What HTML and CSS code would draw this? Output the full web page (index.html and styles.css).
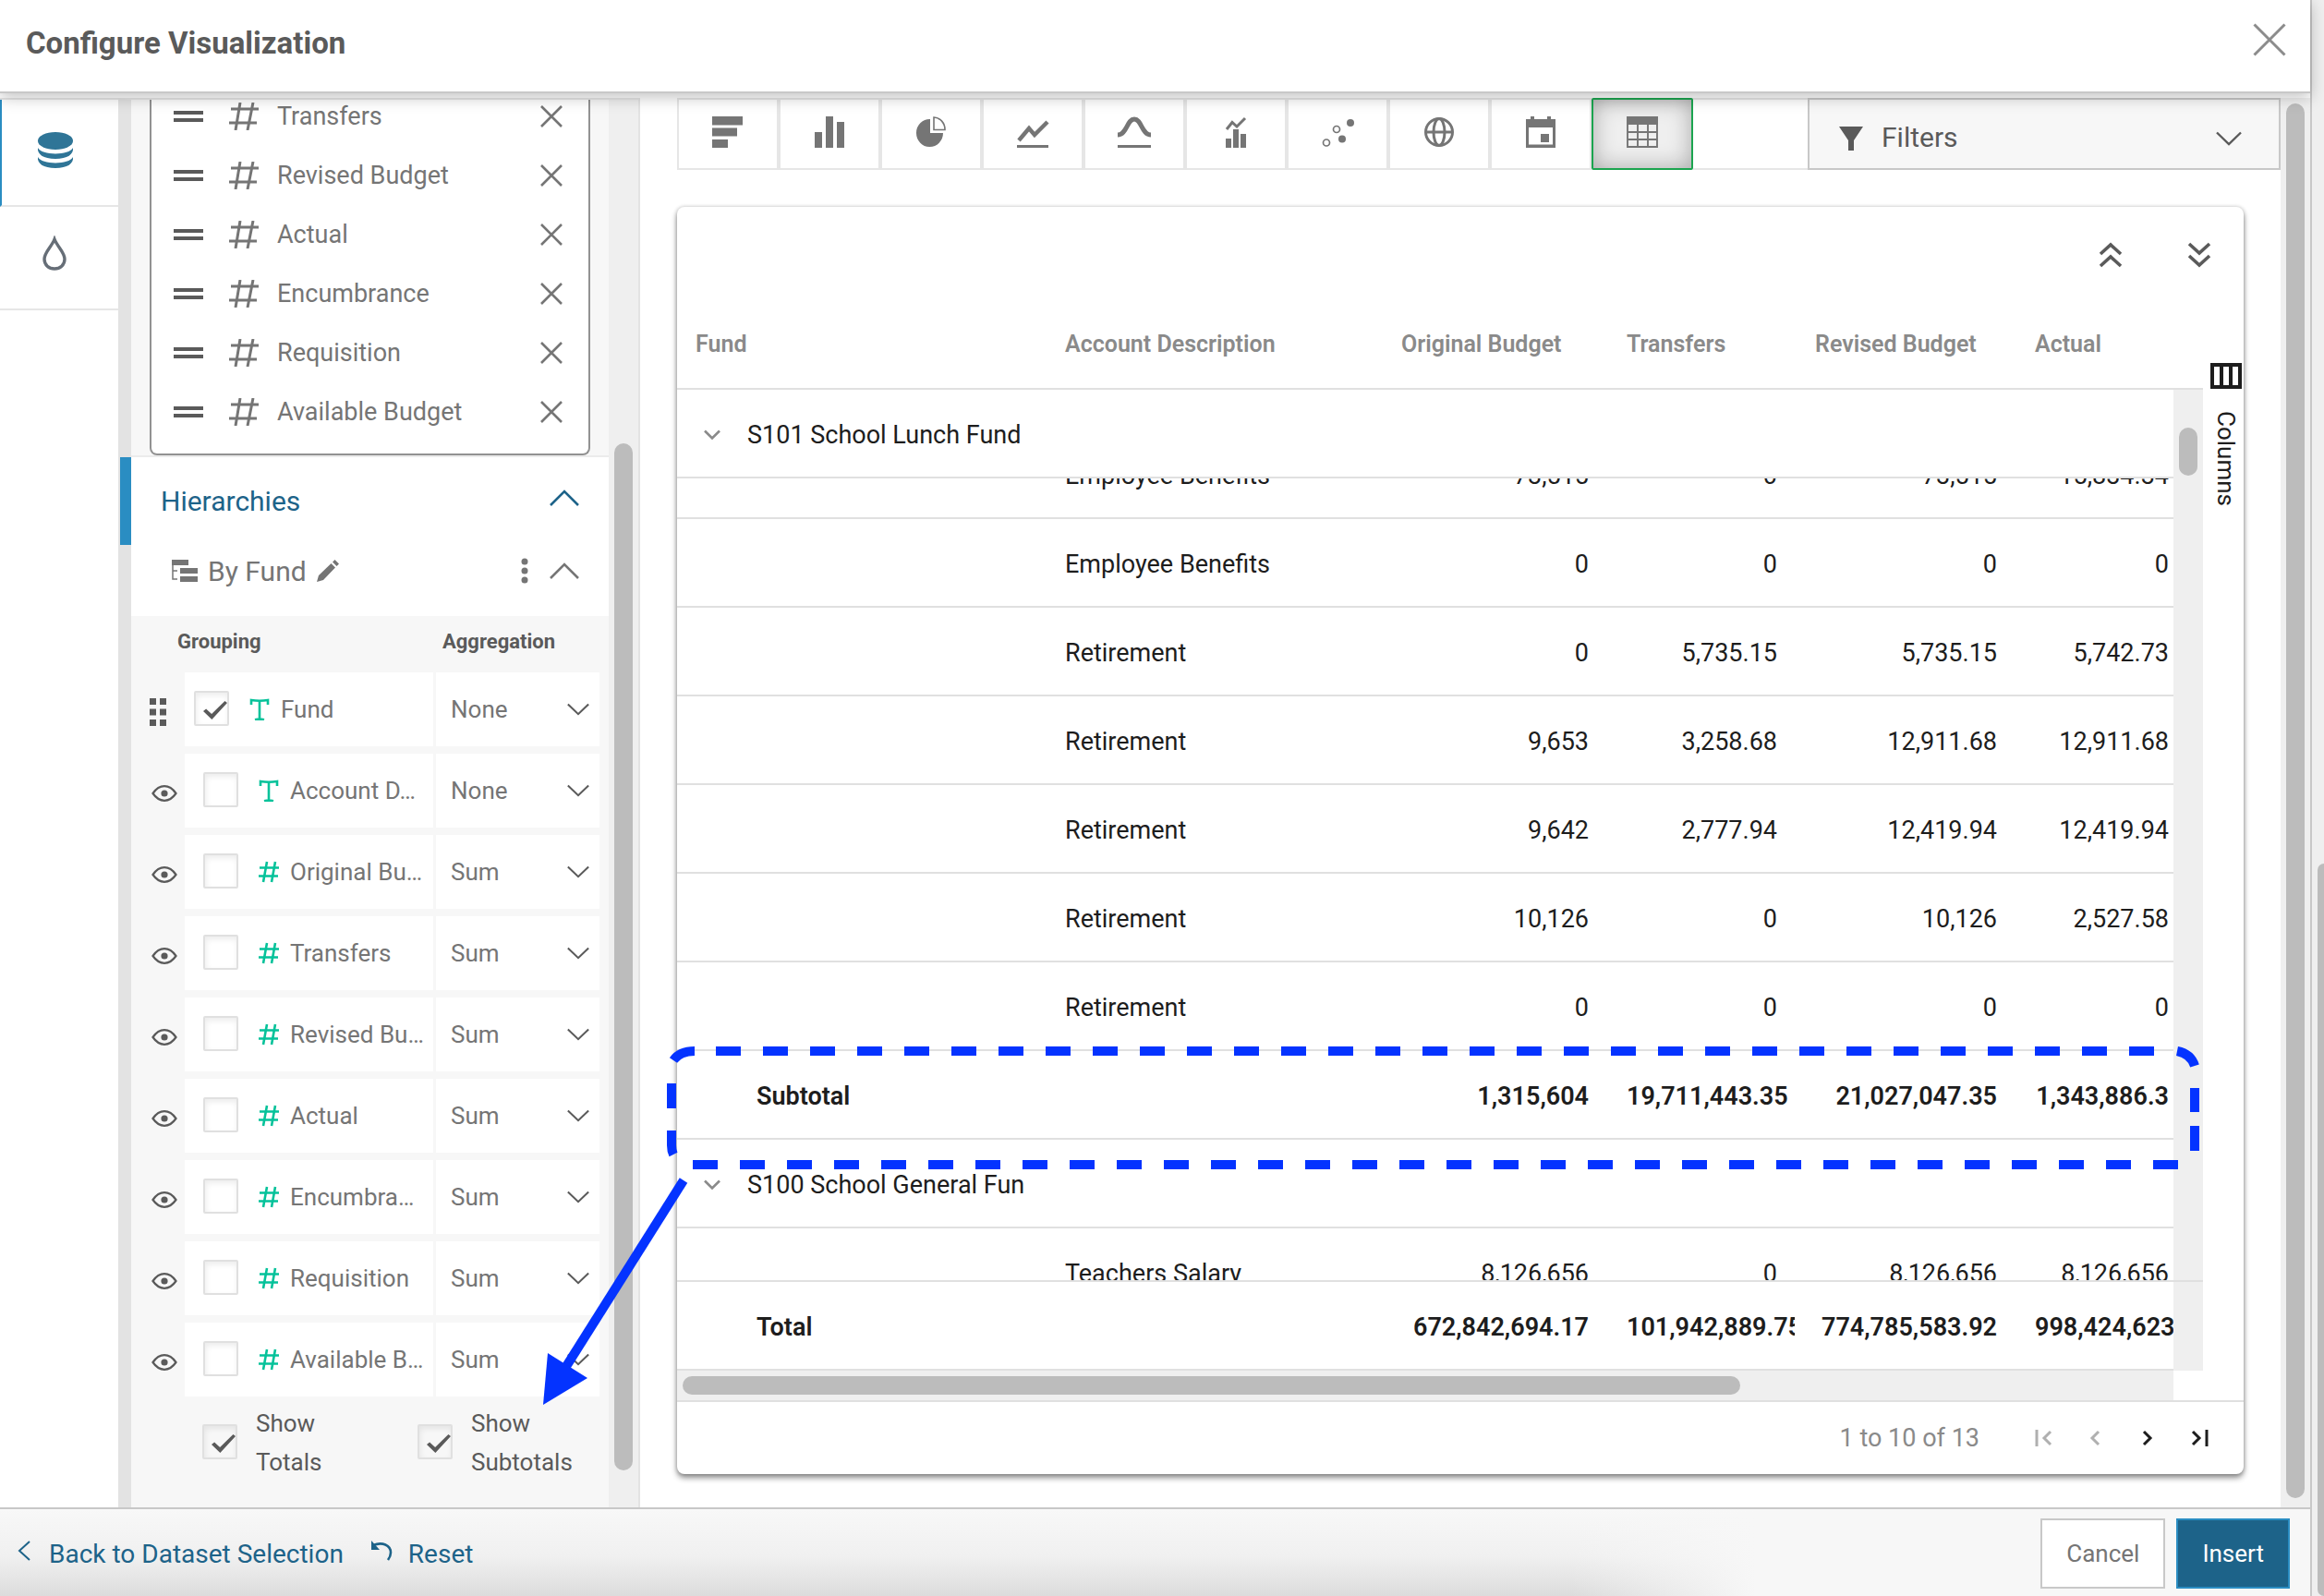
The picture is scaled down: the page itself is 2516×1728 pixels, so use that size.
FILE: index.html
```
<!DOCTYPE html>
<html lang="en">
<head>
    <meta charset="UTF-8">
    <meta name="viewport" content="width=device-width, initial-scale=1.0">
    <title>Configure Visualization</title>
    <link rel="stylesheet" href="styles.css">
</head>
<body>
    <!-- icon set -->
    <svg class="sprite" aria-hidden="true">
        <symbol id="i-close" viewBox="0 0 24 24"><path d="M1 1L23 23M23 1L1 23" fill="none" stroke="currentColor" stroke-width="2"/></symbol>
        <symbol id="i-remove" viewBox="0 0 24 24"><path d="M1 1L23 23M23 1L1 23" fill="none" stroke="currentColor" stroke-width="2.600"/></symbol>
        <symbol id="i-handle" viewBox="0 0 32 12"><path d="M0 2H32M0 10H32" stroke="currentColor" stroke-width="4"/></symbol>
        <symbol id="i-hash" viewBox="0 0 32 30"><path d="M12 0L7 30M26 0L20 30M2 7H32M0 22H30" fill="none" stroke="currentColor" stroke-width="3"/></symbol>
        <symbol id="i-num" viewBox="0 0 24 22"><path d="M10 0L6 22M19 0L15 22M2 6.500H23M1 15.500H22" fill="none" stroke="currentColor" stroke-width="2.600"/></symbol>
        <symbol id="i-text" viewBox="0 0 24 24"><path d="M3 7V2Q12 3.500 21 2V7M12 2V23M7 23.200Q12 22 17 23.200" fill="none" stroke="currentColor" stroke-width="2.600"/></symbol>
        <symbol id="i-down" viewBox="0 0 28 16"><path d="M1 1.500L14 14L27 1.500" fill="none" stroke="currentColor" stroke-width="2.400"/></symbol>
        <symbol id="i-expand" viewBox="0 0 18 12"><path d="M1 1.500L9 9.500L17 1.500" fill="none" stroke="currentColor" stroke-width="2.600"/></symbol>
        <symbol id="i-up" viewBox="0 0 32 18"><path d="M1 17L16 2L31 17" fill="none" stroke="currentColor" stroke-width="2.600"/></symbol>
        <symbol id="i-eye" viewBox="0 0 28 18"><path d="M1.500 9C6 2.500 10 1.200 14 1.200S22 2.500 26.500 9C22 15.500 18 16.800 14 16.800S6 15.500 1.500 9Z" fill="none" stroke="currentColor" stroke-width="2.200"/><circle cx="14" cy="9" r="3.600" fill="currentColor"/></symbol>
        <symbol id="i-drag" viewBox="0 0 18 30"><path d="M0 0h7v7h-7zM11 0h7v7h-7zM0 11.500h7v7h-7zM11 11.500h7v7h-7zM0 23h7v7h-7zM11 23h7v7h-7z" fill="currentColor"/></symbol>
    </svg>

    <div class="modal">
        <header class="modal-header">
            <h1>Configure Visualization</h1>
            <button class="icon-btn close" aria-label="Close"><svg width="36" height="36"><use href="#i-close"/></svg></button>
        </header>

        <div class="modal-body">
            <nav class="rail">
                <button class="rail-item active" aria-label="Data">
                    <svg width="40" height="40" viewBox="0 0 40 40" fill="#2f7597"><ellipse cx="20" cy="9.500" rx="19" ry="9.500"/><path d="M1 17C5 25.500 35 25.500 39 17C40 24 33 29 20 29S0 24 1 17ZM1 27C5 35.500 35 35.500 39 27C40 34 33 39 20 39S0 34 1 27Z"/></svg>
                </button>
                <button class="rail-item" aria-label="Style">
                    <svg width="28" height="38" viewBox="0 0 28 38"><path d="M14 4C11 12 3 18 3 25.500C3 32 8 36 14 36S25 32 25 25.500C25 18 17 12 14 4Z" fill="none" stroke="#666e77" stroke-width="3.400"/></svg>
                </button>
            </nav>

            <aside class="panel">
                <div class="panel-content">
                    <div class="fields">
                        <ul class="field-list">
                            <li><svg class="handle"><use href="#i-handle"/></svg><svg class="hash"><use href="#i-hash"/></svg><span>Transfers</span><button class="icon-btn" aria-label="Remove Transfers"><svg width="24" height="24"><use href="#i-remove"/></svg></button></li>
                            <li><svg class="handle"><use href="#i-handle"/></svg><svg class="hash"><use href="#i-hash"/></svg><span>Revised Budget</span><button class="icon-btn" aria-label="Remove Revised Budget"><svg width="24" height="24"><use href="#i-remove"/></svg></button></li>
                            <li><svg class="handle"><use href="#i-handle"/></svg><svg class="hash"><use href="#i-hash"/></svg><span>Actual</span><button class="icon-btn" aria-label="Remove Actual"><svg width="24" height="24"><use href="#i-remove"/></svg></button></li>
                            <li><svg class="handle"><use href="#i-handle"/></svg><svg class="hash"><use href="#i-hash"/></svg><span>Encumbrance</span><button class="icon-btn" aria-label="Remove Encumbrance"><svg width="24" height="24"><use href="#i-remove"/></svg></button></li>
                            <li><svg class="handle"><use href="#i-handle"/></svg><svg class="hash"><use href="#i-hash"/></svg><span>Requisition</span><button class="icon-btn" aria-label="Remove Requisition"><svg width="24" height="24"><use href="#i-remove"/></svg></button></li>
                            <li><svg class="handle"><use href="#i-handle"/></svg><svg class="hash"><use href="#i-hash"/></svg><span>Available Budget</span><button class="icon-btn" aria-label="Remove Available Budget"><svg width="24" height="24"><use href="#i-remove"/></svg></button></li>
                        </ul>
                    </div>

                    <section class="hierarchies">
                        <button class="section-title">Hierarchies<svg width="32" height="18"><use href="#i-up"/></svg></button>
                        <div class="group-title">
                            <svg width="28" height="24" viewBox="0 0 28 24" fill="#757575"><path d="M0 0h18v6h-18zM9 9h19v6h-19zM9 18h19v6h-19z"/><path d="M1 6V21H6M1 12H6" fill="none" stroke="#757575" stroke-width="1.500"/></svg>
                            <span>By Fund</span>
                            <button class="icon-btn" aria-label="Rename"><svg width="24" height="24" viewBox="0 0 24 24" fill="#757575"><path d="M0 24L2 17L15.500 4L20 8.500L7 22ZM17 2.500L19.500 0L24 4.500L21.500 7Z"/></svg></button>
                            <button class="icon-btn more" aria-label="More"><svg width="8" height="28" viewBox="0 0 8 28" fill="#757575"><circle cx="4" cy="4" r="3.500"/><circle cx="4" cy="14" r="3.500"/><circle cx="4" cy="24" r="3.500"/></svg></button>
                            <button class="icon-btn" aria-label="Collapse"><svg width="32" height="18"><use href="#i-up"/></svg></button>
                        </div>
                    </section>

                    <div class="grouping">
                        <div class="grouping-head"><span>Grouping</span><span>Aggregation</span></div>

                        <div class="group-row first">
                            <svg class="drag"><use href="#i-drag"/></svg>
                            <label class="group-cell"><input type="checkbox" checked><svg class="type"><use href="#i-text"/></svg><span>Fund</span></label>
                            <div class="agg-cell"><select aria-label="Fund aggregation"><option>None</option></select><svg><use href="#i-down"/></svg></div>
                        </div>
                        <div class="group-row">
                            <svg class="eye"><use href="#i-eye"/></svg>
                            <label class="group-cell"><input type="checkbox"><svg class="type"><use href="#i-text"/></svg><span>Account D…</span></label>
                            <div class="agg-cell"><select aria-label="Account Description aggregation"><option>None</option></select><svg><use href="#i-down"/></svg></div>
                        </div>
                        <div class="group-row">
                            <svg class="eye"><use href="#i-eye"/></svg>
                            <label class="group-cell"><input type="checkbox"><svg class="type"><use href="#i-num"/></svg><span>Original Bu…</span></label>
                            <div class="agg-cell"><select aria-label="Original Budget aggregation"><option>Sum</option></select><svg><use href="#i-down"/></svg></div>
                        </div>
                        <div class="group-row">
                            <svg class="eye"><use href="#i-eye"/></svg>
                            <label class="group-cell"><input type="checkbox"><svg class="type"><use href="#i-num"/></svg><span>Transfers</span></label>
                            <div class="agg-cell"><select aria-label="Transfers aggregation"><option>Sum</option></select><svg><use href="#i-down"/></svg></div>
                        </div>
                        <div class="group-row">
                            <svg class="eye"><use href="#i-eye"/></svg>
                            <label class="group-cell"><input type="checkbox"><svg class="type"><use href="#i-num"/></svg><span>Revised Bu…</span></label>
                            <div class="agg-cell"><select aria-label="Revised Budget aggregation"><option>Sum</option></select><svg><use href="#i-down"/></svg></div>
                        </div>
                        <div class="group-row">
                            <svg class="eye"><use href="#i-eye"/></svg>
                            <label class="group-cell"><input type="checkbox"><svg class="type"><use href="#i-num"/></svg><span>Actual</span></label>
                            <div class="agg-cell"><select aria-label="Actual aggregation"><option>Sum</option></select><svg><use href="#i-down"/></svg></div>
                        </div>
                        <div class="group-row">
                            <svg class="eye"><use href="#i-eye"/></svg>
                            <label class="group-cell"><input type="checkbox"><svg class="type"><use href="#i-num"/></svg><span>Encumbra…</span></label>
                            <div class="agg-cell"><select aria-label="Encumbrance aggregation"><option>Sum</option></select><svg><use href="#i-down"/></svg></div>
                        </div>
                        <div class="group-row">
                            <svg class="eye"><use href="#i-eye"/></svg>
                            <label class="group-cell"><input type="checkbox"><svg class="type"><use href="#i-num"/></svg><span>Requisition</span></label>
                            <div class="agg-cell"><select aria-label="Requisition aggregation"><option>Sum</option></select><svg><use href="#i-down"/></svg></div>
                        </div>
                        <div class="group-row">
                            <svg class="eye"><use href="#i-eye"/></svg>
                            <label class="group-cell"><input type="checkbox"><svg class="type"><use href="#i-num"/></svg><span>Available B…</span></label>
                            <div class="agg-cell"><select aria-label="Available Budget aggregation"><option>Sum</option></select><svg><use href="#i-down"/></svg></div>
                        </div>

                        <div class="totals">
                            <label><input type="checkbox" checked><span>Show Totals</span></label>
                            <label><input type="checkbox" checked><span>Show Subtotals</span></label>
                        </div>
                    </div>
                </div>
                <div class="panel-scroll"><div class="thumb"></div></div>
            </aside>

            <main class="content">
                <div class="toolbar">
                    <button class="chart-btn" aria-label="Bar"><svg viewBox="0 0 36 36"><path d="M1 1h33v9.500h-33zM1 13.500h27v9h-27zM1 26h17v9h-17z"/></svg></button>
                    <button class="chart-btn" aria-label="Column"><svg viewBox="0 0 36 36"><path d="M2 18h8v17h-8zM14 1h8v34h-8zM26 7h8v28h-8z"/></svg></button>
                    <button class="chart-btn" aria-label="Pie"><svg viewBox="0 0 36 36"><path d="M17 4V19H31A14.500 15 0 1 1 17 4Z"/><path d="M21 2V15.500H33C33 8 28 2.500 21 2Z" fill="none" stroke="#757575" stroke-width="1.600"/></svg></button>
                    <button class="chart-btn" aria-label="Line"><svg viewBox="0 0 36 36"><path d="M3 27L14 14L20 21L34 7" fill="none" stroke="#757575" stroke-width="4.400"/><path d="M1 32h34v3h-34z"/></svg></button>
                    <button class="chart-btn" aria-label="Spline"><svg viewBox="0 0 36 36"><path d="M0 21C10 21 10 4 18 4S26 21 36 21" fill="none" stroke="#757575" stroke-width="5"/><path d="M0 32h36v3h-36z"/></svg></button>
                    <button class="chart-btn" aria-label="Combo"><svg viewBox="0 0 36 36"><path d="M7 25h6v10h-6zM15 15h6v20h-6zM23 20h6v15h-6z"/><path d="M8 15L14 7.500L19 12L28 3" fill="none" stroke="#757575" stroke-width="3"/></svg></button>
                    <button class="chart-btn" aria-label="Scatter"><svg viewBox="0 0 36 36"><circle cx="32" cy="8" r="4"/><circle cx="23" cy="25.500" r="4"/><g fill="none" stroke="#757575" stroke-width="1.700"><circle cx="17" cy="15" r="3.500"/><circle cx="6" cy="29.500" r="3.500"/></g></svg></button>
                    <button class="chart-btn" aria-label="Map"><svg viewBox="0 0 36 36"><g fill="none" stroke="#757575" stroke-width="3"><circle cx="18" cy="18" r="14.500"/><ellipse cx="18" cy="18" rx="6" ry="14.500"/><path d="M4 18H32"/></g></svg></button>
                    <button class="chart-btn" aria-label="Calendar"><svg viewBox="0 0 36 36"><path d="M7 1h4v3h14V1h4v3h5v31H2V4h5ZM5 13V31.500H31V13ZM18 20h9v9h-9z" fill-rule="evenodd"/></svg></button>
                    <button class="chart-btn selected" aria-label="Table"><svg viewBox="0 0 36 36"><path d="M1 1h34v9h-34z"/><path d="M2 10V34H34V10M13 10V34M24 10V34M2 18H34M2 26H34" fill="none" stroke="#757575" stroke-width="1.900"/></svg></button>
                    <div class="toolbar-gap"></div>
                    <button class="filters">
                        <svg width="26" height="28" viewBox="0 0 26 28"><path d="M0 1h26L16 16V27H10V16Z" fill="#5a5a5a"/></svg>
                        <span>Filters</span>
                        <svg width="28" height="16"><use href="#i-down"/></svg>
                    </button>
                </div>

                <div class="card">
                    <div class="card-tools">
                        <button class="icon-btn" aria-label="Collapse all"><svg width="26" height="28" viewBox="0 0 26 28"><path d="M2 13L13 3L24 13M2 26L13 16L24 26" fill="none" stroke="#5a5a5a" stroke-width="3.600"/></svg></button>
                        <button class="icon-btn" aria-label="Expand all"><svg width="26" height="28" viewBox="0 0 26 28"><path d="M2 2L13 12L24 2M2 15L13 25L24 15" fill="none" stroke="#5a5a5a" stroke-width="3.600"/></svg></button>
                    </div>

                    <div class="grid">
                        <div class="grid-view">
                            <table>
                                <thead>
                                    <tr><th>Fund</th><th>Account Description</th><th>Original Budget</th><th>Transfers</th><th>Revised Budget</th><th>Actual</th></tr>
                                </thead>
                                <tbody>
                                    <tr class="group sticky"><td colspan="6"><svg width="18" height="12"><use href="#i-expand"/></svg>S101 School Lunch Fund</td></tr>
                                    <tr class="scrolled"><td></td><td>Employee Benefits</td><td>73,515</td><td>0</td><td>73,515</td><td>15,834.34</td></tr>
                                    <tr><td></td><td>Employee Benefits</td><td>0</td><td>0</td><td>0</td><td>0</td></tr>
                                    <tr><td></td><td>Retirement</td><td>0</td><td>5,735.15</td><td>5,735.15</td><td>5,742.73</td></tr>
                                    <tr><td></td><td>Retirement</td><td>9,653</td><td>3,258.68</td><td>12,911.68</td><td>12,911.68</td></tr>
                                    <tr><td></td><td>Retirement</td><td>9,642</td><td>2,777.94</td><td>12,419.94</td><td>12,419.94</td></tr>
                                    <tr><td></td><td>Retirement</td><td>10,126</td><td>0</td><td>10,126</td><td>2,527.58</td></tr>
                                    <tr><td></td><td>Retirement</td><td>0</td><td>0</td><td>0</td><td>0</td></tr>
                                    <tr class="sum"><td>Subtotal</td><td></td><td>1,315,604</td><td>19,711,443.35</td><td>21,027,047.35</td><td>1,343,886.3</td></tr>
                                    <tr class="group"><td colspan="6"><svg width="18" height="12"><use href="#i-expand"/></svg>S100 School General Fun</td></tr>
                                    <tr><td></td><td>Teachers Salary</td><td>8,126,656</td><td>0</td><td>8,126,656</td><td>8,126,656</td></tr>
                                </tbody>
                                <tfoot>
                                    <tr class="sum"><td>Total</td><td></td><td>672,842,694.17</td><td>101,942,889.75</td><td>774,785,583.92</td><td>998,424,623.10</td></tr>
                                </tfoot>
                            </table>
                            <div class="h-scroll"><div class="thumb"></div></div>
                        </div>
                        <div class="v-scroll">
                            <div class="v-head"></div>
                            <div class="v-track"><div class="thumb"></div></div>
                            <div class="v-foot"></div>
                        </div>
                        <button class="columns-tab">
                            <svg width="34" height="28" viewBox="0 0 34 28"><path d="M2 2H32V26H2ZM12 2V26M22 2V26" fill="none" stroke="#1d1d1d" stroke-width="4"/></svg>
                            <span>Columns</span>
                        </button>
                    </div>

                    <div class="pager">
                        <span>1 to 10 of 13</span>
                        <button class="icon-btn" disabled aria-label="First page"><svg viewBox="0 0 20 20"><path d="M2 1V19M17 3L10 10L17 17" /></svg></button>
                        <button class="icon-btn" disabled aria-label="Previous page"><svg viewBox="0 0 20 20"><path d="M13 3L6 10L13 17"/></svg></button>
                        <button class="icon-btn" aria-label="Next page"><svg viewBox="0 0 20 20"><path d="M6 3L13 10L6 17"/></svg></button>
                        <button class="icon-btn" aria-label="Last page"><svg viewBox="0 0 20 20"><path d="M3 3L10 10L3 17M18 1V19"/></svg></button>
                    </div>
                </div>
            </main>
            <div class="content-scroll"><div class="thumb"></div></div>
        </div>

        <footer class="modal-footer">
            <a href="#"><svg width="14" height="22" viewBox="0 0 14 22"><path d="M13 1L2 11L13 21" fill="none" stroke="currentColor" stroke-width="2"/></svg>Back to Dataset Selection</a>
            <a href="#" class="reset"><svg width="24" height="22" viewBox="0 0 24 22"><path d="M2 5C12 1 21 5 21 13Q21 17 18 21" fill="none" stroke="currentColor" stroke-width="2.600"/><path d="M0 0V10H9Z" fill="currentColor"/></svg>Reset</a>
            <div class="actions">
                <button class="btn">Cancel</button>
                <button class="btn primary">Insert</button>
            </div>
        </footer>
    </div>
    <div class="page-scroll"><div class="thumb"></div></div>

    <!-- callout linking the subtotal row to its checkbox -->
    <svg class="callout" width="2516" height="1728" aria-hidden="true">
        <g fill="none" stroke="#0433ff" stroke-width="10">
            <path d="M775 1138H2334" stroke-dasharray="27 24"/>
            <path d="M750 1261H2359" stroke-dasharray="27 24"/>
            <path d="M729 1148Q736 1138 752 1138M727 1173V1200M727 1224V1240Q727 1246 729 1250"/>
            <path d="M2357 1138Q2372 1141 2376 1154M2376 1178V1204M2376 1219V1246"/>
            <path d="M740 1278L612 1481"/>
        </g>
        <path d="M588 1521L593 1465L636 1492Z" fill="#0433ff"/>
    </svg>
</body>
</html>
```
FILE: styles.css
```
* {
    margin: 0;
    padding: 0;
    box-sizing: border-box;
}

body {
    font-family: Roboto, sans-serif;
    font-size: 27px;
    color: #757575;
    background-color: #ffffff;
    display: flex;
    height: 100vh;
    overflow: hidden;
    position: relative;
}

button,
select {
    font: inherit;
    color: inherit;
    background: none;
    border: none;
    cursor: pointer;
}

svg {
    display: block;
    flex-shrink: 0;
}

.sprite {
    display: none;
}

.callout {
    position: absolute;
    top: 0;
    left: 0;
    pointer-events: none;
    z-index: 5;
}

.icon-btn {
    display: flex;
    align-items: center;
    justify-content: center;
}

.thumb {
    background-color: #bcbcbc;
    border-radius: 10px;
}

/* modal */
.modal {
    flex: 1;
    min-width: 0;
    display: flex;
    flex-direction: column;
}

.modal-header {
    height: 101px;
    padding: 0 26px 6px 28px;
    display: flex;
    align-items: center;
    justify-content: space-between;
    background-color: #ffffff;
    border-bottom: 2px solid #c8c8c8;
    box-shadow: 0 4px 16px rgba(0, 0, 0, 0.25);
    position: relative;
    z-index: 2;
}

.modal-header h1 {
    font-size: 33px;
    font-weight: 700;
    color: #5a5a5a;
}

.close {
    color: #8c8c8c;
    margin-bottom: 8px;
}

.modal-body {
    flex: 1;
    min-height: 0;
    display: flex;
    padding-top: 5px;
}

/* left rail */
.rail {
    width: 128px;
    border-top: 2px solid #e6e6e6;
}

.rail-item {
    width: 100%;
    height: 112px;
    padding: 0 10px 10px 0;
    display: flex;
    align-items: center;
    justify-content: center;
    border-bottom: 2px solid #e6e6e6;
}

.rail-item.active {
    height: 116px;
    padding-bottom: 4px;
    border-left: 2px solid #2a8dc2;
}

/* side panel */
.panel {
    width: 565px;
    display: flex;
    border-left: 14px solid #e3e3e3;
    border-right: 2px solid #e3e3e3;
    border-top: 2px solid #e6e6e6;
    background-color: #f7f7f7;
}

.panel-content {
    flex: 1;
    min-width: 0;
    overflow: hidden;
    margin-left: -12px;
    padding-left: 12px;
}

.panel-scroll {
    width: 32px;
    padding: 372px 6px 0;
    background-color: #efefef;
}

.panel-scroll .thumb {
    height: 1112px;
}

.fields {
    margin-top: -14px;
    padding: 0 20px;
    border-bottom: 2px solid #ebebeb;
}

.field-list {
    list-style: none;
    padding: 0 28px 13px 24px;
    background-color: #ffffff;
    border: 2px solid #929292;
    border-top: none;
    border-radius: 0 0 8px 8px;
}

.field-list li {
    height: 64px;
    display: flex;
    align-items: center;
}

.field-list .handle {
    width: 32px;
    height: 12px;
    color: #5a5a5a;
    margin-right: 28px;
}

.field-list .hash {
    width: 32px;
    height: 30px;
    margin-right: 20px;
}

.field-list span {
    flex: 1;
}

.hierarchies {
    background-color: #ffffff;
    height: 172px;
}

.section-title {
    width: calc(100% + 12px);
    height: 95px;
    margin-left: -12px;
    padding: 0 32px 0 32px;
    display: flex;
    align-items: center;
    justify-content: space-between;
    font-size: 30px;
    color: #1d6389;
    border-left: 12px solid #2a8dc2;
}

.section-title svg {
    margin-bottom: 8px;
}

.group-title {
    height: 58px;
    padding: 0 32px 2px 44px;
    display: flex;
    align-items: center;
    gap: 11px;
    font-size: 30px;
}

.group-title .more {
    margin-left: auto;
    margin-right: 12px;
}

.grouping-head {
    height: 61px;
    padding: 0 50px 6px;
    display: grid;
    grid-template-columns: 287px 1fr;
    align-items: center;
    font-size: 22px;
    font-weight: 700;
    color: #5a5a5a;
}

.group-row {
    height: 80px;
    margin-bottom: 8px;
    padding-right: 10px;
    display: grid;
    grid-template-columns: 58px 269px 1fr;
    align-items: center;
    font-size: 26px;
}

.eye {
    width: 28px;
    height: 18px;
    margin: 6px 0 0 22px;
    color: #5a5a5a;
}

.drag {
    width: 18px;
    height: 30px;
    margin: 6px 0 0 20px;
    color: #5a5a5a;
}

.group-cell {
    height: 80px;
    padding: 0 6px 0 20px;
    display: flex;
    align-items: center;
    background-color: #ffffff;
}

.first .group-cell {
    padding-left: 10px;
}

.group-cell span {
    white-space: nowrap;
}

.type {
    width: 24px;
    height: 24px;
    margin: 0 11px 0 21px;
    color: #05c29a;
}

input[type="checkbox"] {
    appearance: none;
    flex-shrink: 0;
    width: 38px;
    height: 38px;
    margin-bottom: 2px;
    border: 2px solid #e0e0e0;
    border-radius: 2px;
    box-shadow: inset 1px 3px 6px rgba(0, 0, 0, 0.08);
}

input[type="checkbox"]:checked::after {
    content: "";
    display: block;
    width: 26px;
    height: 20px;
    margin: 9px 0 0 8px;
    background-color: #5a5a5a;
    clip-path: polygon(0 55%, 12% 42%, 35% 70%, 90% 0, 100% 10%, 36% 100%);
}

.agg-cell {
    height: 80px;
    margin-left: 3px;
    display: flex;
    align-items: center;
    background-color: #ffffff;
    position: relative;
}

.agg-cell select {
    appearance: none;
    width: 100%;
    height: 100%;
    padding-left: 16px;
}

.agg-cell svg {
    position: absolute;
    right: 11px;
    width: 24px;
    height: 14px;
    color: #5a5a5a;
    pointer-events: none;
}

.totals {
    margin-left: 77px;
    display: grid;
    grid-template-columns: 233px 1fr;
    font-size: 26px;
    line-height: 42px;
    color: #5a5a5a;
}

.totals label {
    display: flex;
    align-items: center;
    gap: 20px;
}

.totals span {
    width: min-content;
}

/* content */
.content {
    flex: 1;
    min-width: 0;
    display: flex;
    flex-direction: column;
    padding-left: 40px;
}

.toolbar {
    height: 78px;
    display: flex;
}

.chart-btn {
    width: 110px;
    padding-bottom: 4px;
    display: flex;
    align-items: center;
    justify-content: center;
    border: 2px solid #e6e6e6;
}

.chart-btn svg {
    width: 36px;
    height: 36px;
    fill: #757575;
}

.chart-btn.selected {
    border-color: #1ba44f;
    border-radius: 2px;
    background-color: #efefef;
    box-shadow: inset 0 0 24px rgba(0, 0, 0, 0.3);
}

.toolbar-gap {
    flex: 1;
    border-top: 2px solid #e6e6e6;
    border-bottom: 2px solid #e6e6e6;
}

.filters {
    width: 512px;
    padding: 6px 40px 0 32px;
    display: flex;
    align-items: center;
    gap: 20px;
    font-size: 30px;
    text-align: left;
    color: #5a5a5a;
    background-color: #f7f7f7;
    border: 2px solid #c8c8c8;
}

.filters span {
    flex: 1;
}

.filters svg {
    margin-top: 4px;
}

.card {
    flex: 1;
    min-height: 0;
    margin: 40px 40px 36px 0;
    display: flex;
    flex-direction: column;
    background-color: #ffffff;
    border-radius: 8px;
    box-shadow: 0 4px 6px rgba(0, 0, 0, 0.45), 0 0 4px rgba(0, 0, 0, 0.2);
}

.card-tools {
    height: 100px;
    padding: 4px 35px 0 0;
    display: flex;
    align-items: center;
    justify-content: flex-end;
    gap: 70px;
}

.grid {
    flex: 1;
    min-height: 0;
    display: flex;
    border-bottom: 2px solid #e0e0e0;
}

.grid-view {
    flex: 1;
    min-width: 0;
    display: flex;
    flex-direction: column;
    overflow: hidden;
}

table {
    flex: 1;
    min-height: 0;
    display: flex;
    flex-direction: column;
    color: #1d1d1d;
}

thead,
tbody,
tfoot {
    display: block;
}

tbody {
    flex: 1;
    min-height: 0;
    overflow: hidden;
}

tr {
    height: 96px;
    display: grid;
    grid-template-columns: 398px 364px 244px 204px 238px 186px;
    align-items: center;
    border-bottom: 2px solid #e0e0e0;
    background-color: #ffffff;
}

thead tr {
    height: 98px;
}

th {
    padding: 0 19px 0 22px;
    text-align: left;
    font-size: 25px;
    font-weight: 600;
    color: #8a8a8a;
}

th:first-child {
    padding-left: 20px;
}

td {
    padding: 4px 19px 0 22px;
    overflow: hidden;
    white-space: nowrap;
    text-align: right;
}

td:first-child,
td:nth-child(2) {
    text-align: left;
}

.group td {
    grid-column: 1 / -1;
    padding-left: 29px;
    display: flex;
    align-items: center;
    gap: 29px;
}

.group svg {
    color: #8a8a8a;
}

.sticky {
    position: relative;
    z-index: 1;
}

.scrolled {
    margin-top: -52px;
}

.sum td {
    font-weight: 600;
}

.sum td:first-child {
    padding-left: 86px;
}

tfoot {
    border-top: 2px solid #e0e0e0;
}

.h-scroll {
    height: 32px;
    padding: 6px;
    background-color: #efefef;
}

.h-scroll .thumb {
    width: 1145px;
    height: 20px;
}

.v-scroll {
    width: 32px;
    margin-bottom: 32px;
    display: flex;
    flex-direction: column;
}

.v-head {
    height: 98px;
    border-bottom: 2px solid #e0e0e0;
}

.v-track {
    flex: 1;
    padding: 41px 6px 0;
    background-color: #efefef;
}

.v-track .thumb {
    height: 52px;
}

.v-foot {
    height: 98px;
    background-color: #efefef;
    border-top: 2px solid #e0e0e0;
}

.columns-tab {
    width: 44px;
    padding: 69px 0 0 6px;
    display: flex;
    flex-direction: column;
    align-items: center;
    gap: 24px;
    font-size: 26px;
    color: #1d1d1d;
}

.columns-tab span {
    writing-mode: vertical-rl;
}

.pager {
    height: 78px;
    padding-right: 38px;
    display: flex;
    align-items: center;
    justify-content: flex-end;
    gap: 36px;
    color: #8a8a8a;
}

.pager span {
    margin-right: 24px;
}

.pager svg {
    width: 20px;
    height: 20px;
    fill: none;
    stroke: #1d1d1d;
    stroke-width: 3;
}

.pager button:disabled svg {
    stroke: #b0b0b0;
}

.content-scroll {
    width: 32px;
    padding: 6px 6px 10px;
    background-color: #efefef;
}

.content-scroll .thumb {
    height: 100%;
}

/* footer */
.modal-footer {
    height: 96px;
    padding: 2px 22px 0 19px;
    display: flex;
    align-items: center;
    gap: 30px;
    border-top: 2px solid #c8c8c8;
    background: linear-gradient(to right, rgba(247, 247, 247, 0) 68%, #f7f7f7 76%),
        linear-gradient(to bottom, #f8f8f8, #f0f0f0 55%, #dcdcdc);
}

.modal-footer a {
    display: flex;
    align-items: center;
    gap: 20px;
    font-size: 28px;
    color: #1d6389;
    text-decoration: none;
}

.modal-footer a svg {
    margin-bottom: 6px;
}

.modal-footer .reset {
    gap: 16px;
}

.actions {
    margin-left: auto;
    display: flex;
    gap: 12px;
}

.btn {
    height: 76px;
    padding: 0 26px;
    font-size: 26px;
    color: #757575;
    background-color: #ffffff;
    border: 2px solid #c8c8c8;
}

.btn.primary {
    color: #ffffff;
    background-color: #1d6389;
    border-color: #2a8dc2;
}

.page-scroll {
    width: 15px;
    padding: 935px 0 0 6px;
    background-color: #efefef;
    border-left: 2px solid #c8c8c8;
}

.page-scroll .thumb {
    height: 100%;
    border-radius: 10px 0 0 10px;
}
```
